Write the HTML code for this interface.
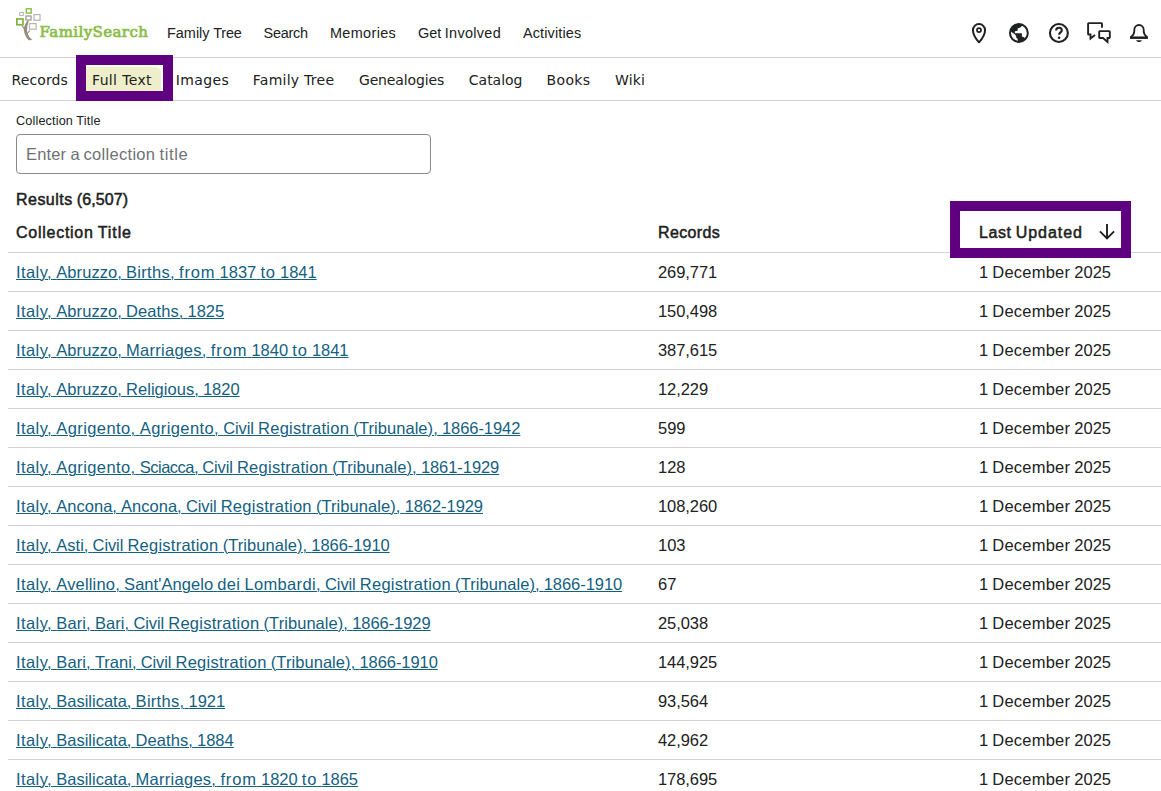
<!DOCTYPE html><html lang="en"><head><meta charset="utf-8"><title>FamilySearch Full Text Collections</title><style>
*{box-sizing:border-box;margin:0;padding:0}
html,body{width:1161px;height:791px;overflow:hidden;background:#fff}
body{font-family:"Liberation Sans", sans-serif;color:#202121;position:relative;-webkit-font-smoothing:auto}
a{color:#14607f}
header{position:absolute;left:0;top:0;width:1161px;height:58px;border-bottom:1px solid #d2d2d2}
.logo{position:absolute;left:0;top:0;width:160px;height:57px;text-decoration:none}
.logo svg{position:absolute;left:0;top:0}
.logo b{position:absolute;left:39.5px;top:21px;font-family:"DejaVu Serif","Liberation Serif",serif;font-weight:400;font-size:15px;line-height:22px;color:#8abd48;letter-spacing:0.4px;-webkit-text-stroke:0.7px #8abd48;white-space:nowrap}
nav.main a{position:absolute;top:22px;line-height:22px;white-space:nowrap;color:#202121;text-decoration:none}
.ic{position:absolute;top:21px;width:24px;height:24px}
nav.tabs{position:absolute;left:0;top:58px;width:1161px;height:43px;border-bottom:1px solid #d2d2d2;font-family:"DejaVu Sans",sans-serif;font-size:14px}
nav.tabs a{position:absolute;top:11px;line-height:22px;white-space:nowrap;color:#202121;text-decoration:none}
.hl1{position:absolute;left:76px;top:55px;width:97px;height:46px;border:10px solid #5e0080;background:#fff}
.hl1 i{position:absolute;left:0;top:2px;width:75px;height:24px;background:#eeeecb;border-radius:3px 5px 0 0}
.lbl{position:absolute;left:16px;top:111px;line-height:18px;white-space:nowrap}
.inp{position:absolute;left:16px;top:134px;width:415px;height:40px;border:1px solid #878a8c;border-radius:4px;background:#fff}
.inp>span{position:absolute;left:9px;top:8px;line-height:22px;color:#6e7274;white-space:nowrap}
.res{position:absolute;left:16px;top:189px;line-height:22px;font-weight:400;-webkit-text-stroke:0.5px #202121;white-space:nowrap}
.th{z-index:3;position:absolute;top:222px;line-height:22px;font-weight:400;-webkit-text-stroke:0.5px #202121;white-space:nowrap}
.hl2{z-index:2;position:absolute;left:950px;top:201px;width:181px;height:57px;border:10px solid #5e0080;background:#fff}
.row{position:absolute;left:8px;width:1153px;height:39px;border-top:1px solid #d2d2d2}
.row>*{position:absolute;top:8px;line-height:22px;white-space:nowrap}
.row a{left:8px;text-decoration:underline;text-decoration-thickness:1px;text-underline-offset:1px}
.row .n{left:650px}
.row .d{left:971px}
</style></head><body>
<header>
<a class="logo" href="#"><svg width="60" height="57" viewBox="0 0 60 57" fill="none">
<path d="M27.400 20.600C26 23.500 23.700 26 23.800 29.500 24 33.800 26 37.600 28.600 40.300L32.400 40.100C29.600 37.900 27.600 34.800 27.200 31.600 26.800 28 27.600 24.200 28.900 20.700z" fill="#978e7d"/>
<path d="M22 25.700L24.800 29.400M29.900 30.500L27.200 33.500" stroke="#978e7d" stroke-width="1.100"/>
<rect x="26.300" y="8.800" width="4.900" height="4.300" stroke="#8abd48" stroke-width="1.400"/>
<rect x="19.700" y="12.500" width="3.600" height="2.900" stroke="#b7b4af" stroke-width="1"/>
<rect x="25.950" y="16" width="5.100" height="4" stroke="#a39b92" stroke-width="1.300"/>
<rect x="34" y="14.600" width="6" height="5.700" stroke="#b7b4af" stroke-width="1.200"/>
<rect x="16.850" y="18.950" width="6.100" height="5.800" stroke="#7fb53e" stroke-width="1.700"/>
<rect x="29.500" y="23.600" width="6.600" height="5.600" stroke="#b7b4af" stroke-width="1.200"/>
</svg><b>FamilySearch</b></a>
<nav class="main">
<a href="#" style="left:167px"><span style="font-size:14.44px;word-spacing:-0.375px;"><span style="letter-spacing:0.010px;">Family</span> <span style="letter-spacing:-0.191px;">Tree</span></span></a>
<a href="#" style="left:263.5px"><span style="font-size:14.44px;"><span style="letter-spacing:-0.240px;">Search</span></span></a>
<a href="#" style="left:330px"><span style="font-size:14.44px;"><span style="letter-spacing:0.346px;">Memories</span></span></a>
<a href="#" style="left:418px"><span style="font-size:14.44px;word-spacing:-0.375px;"><span style="letter-spacing:-0.042px;">Get</span> <span style="letter-spacing:0.305px;">Involved</span></span></a>
<a href="#" style="left:523px"><span style="font-size:14.44px;"><span style="letter-spacing:0.136px;">Activities</span></span></a>
</nav>
<svg class="icons" style="position:absolute;left:960px;top:14px" width="200" height="38" viewBox="960 14 200 38" fill="none" stroke="#202121">
<path d="M979 42.3C975.2 38 972.95 34 972.95 30.15a6.050 6.050 0 0 1 12.100 0C985.050 34 982.800 38 979 42.300z" stroke-width="2" stroke-linejoin="round"/>
<circle cx="979" cy="30.1" r="2.050" stroke-width="1.700"/>
<clipPath id="gc"><circle cx="1018.900" cy="33" r="7.900"/></clipPath>
<circle cx="1018.900" cy="33" r="9.900" fill="#202121" stroke="none"/>
<g clip-path="url(#gc)" fill="#fff" stroke="none">
<path d="M1022.400 25.600L1025.500 24 1030 30 1030 37 1025.600 38.600 1023.400 36.900 1021.900 36.400 1021.900 33.300 1014.900 33.300 1014.900 31.200 1017.500 30.700 1017.800 28.200 1020.450 27.550z"/>
<path d="M1011.300 31.800L1009 31 1009 38 1013 42 1017.800 42 1017.650 39.050 1016.350 37.750 1016.150 36.100 1014.500 34.100 1012.550 32.800z"/>
</g>
<circle cx="1058.900" cy="33" r="8.950" stroke-width="2.1"/>
<path d="M1056.100 30.600c0-1.700 1.300-2.800 2.900-2.800s2.800 1.100 2.800 2.500c0 2-2.700 2.200-2.700 4.500" stroke-width="2.100"/>
<circle cx="1059.100" cy="37.800" r="1.300" fill="#202121" stroke="none"/>
<path d="M1102 27.800V23.700a.600.600 0 0 0-.600-.600H1088.700a.600.600 0 0 0-.600.600V33.900a.600.600 0 0 0 .600.600H1090.500V38.600L1095 34.900" stroke-width="1.900" stroke-linejoin="miter"/>
<path d="M1099.800 31.100H1109.200a.600.600 0 0 1 .600.600V37.400a.600.600 0 0 1-.600.600H1107.500V42L1103 38H1099.800a.600.600 0 0 1-.600-.600V31.700a.600.600 0 0 1 .600-.600z" stroke-width="1.900" stroke-linejoin="miter"/>
<path d="M1130.100 36.600H1147.900V38.900H1130.100z" fill="#202121" stroke="none"/>
<path d="M1131 37.700H1147V36.900C1144.700 35.300 1143.700 33.500 1143.700 31V29.700a4.700 4.700 0 0 0-9.400 0V31C1134.300 33.500 1133.300 35.300 1131 36.900z" stroke-width="1.800" stroke-linejoin="round"/>
<path d="M1136 40.300H1142C1141.400 41.500 1140.300 42.100 1139 42.100S1136.600 41.500 1136 40.300z" fill="#202121" stroke="none"/>
</svg>
</header>
<nav class="tabs">
</nav>
<div class="hl1"><i></i></div>
<nav class="tabs" style="border:0;background:none">
<a href="#" style="left:11.49px;letter-spacing:0.117px">Records</a>
<a href="#" style="left:91.99px;letter-spacing:0.357px">Full Text</a>
<a href="#" style="left:175.79px;letter-spacing:0.384px">Images</a>
<a href="#" style="left:252.79px;letter-spacing:0.257px">Family Tree</a>
<a href="#" style="left:358.93px;letter-spacing:-0.134px">Genealogies</a>
<a href="#" style="left:468.83px;letter-spacing:-0.021px">Catalog</a>
<a href="#" style="left:546.59px;letter-spacing:0.337px">Books</a>
<a href="#" style="left:614.99px;letter-spacing:0.124px">Wiki</a>
</nav>
<label class="lbl"><span style="font-size:12.68px;word-spacing:-0.328px;"><span style="letter-spacing:0.139px;">Collection</span> <span style="letter-spacing:0.216px;">Title</span></span></label>
<div class="inp"><span><span style="font-size:16.50px;word-spacing:-0.422px;"><span style="letter-spacing:0.153px;">Enter</span> <span style="letter-spacing:-0.203px;">a</span> <span style="letter-spacing:0.300px;">collection</span> <span style="letter-spacing:0.631px;">title</span></span></span></div>
<div class="res"><span style="font-size:16.00px;word-spacing:-0.281px;"><span style="letter-spacing:0.471px;">Results</span> <span style="letter-spacing:0.107px;">(6,507)</span></span></div>
<div class="hl2"></div>
<div class="th" style="left:16px"><span style="font-size:16.00px;word-spacing:-0.281px;"><span style="letter-spacing:0.738px;">Collection</span> <span style="letter-spacing:0.878px;">Title</span></span></div>
<div class="th" style="left:658px"><span style="font-size:16.00px;"><span style="letter-spacing:0.359px;">Records</span></span></div>
<div class="th" style="left:979px"><span style="font-size:16.00px;word-spacing:-0.281px;"><span style="letter-spacing:0.559px;">Last</span> <span style="letter-spacing:0.960px;">Updated</span></span></div>
<svg style="position:absolute;z-index:3;left:1096px;top:221px" width="22" height="22" viewBox="0 0 22 22" fill="none"><path d="M11 3.100V17.300M3.900 10.400l7.100 7.100 7.100-7.100" stroke="#202121" stroke-width="1.900"/></svg>
<div class="row" style="top:252px"><a href="#"><span style="font-size:16.50px;word-spacing:-0.422px;"><span style="letter-spacing:0.417px;">Italy,</span> <span style="letter-spacing:0.057px;">Abruzzo,</span> <span style="letter-spacing:0.286px;">Births,</span> <span style="letter-spacing:0.859px;">from</span> <span style="letter-spacing:-0.027px;">1837</span> <span style="letter-spacing:0.852px;">to</span> <span style="letter-spacing:-0.027px;">1841</span></span></a><span class="n"><span style="font-size:16.50px;"><span style="letter-spacing:-0.065px;">269,771</span></span></span><span class="d"><span style="font-size:16.50px;word-spacing:-0.422px;"><span style="letter-spacing:-0.031px;">1</span> <span style="letter-spacing:0.215px;">December</span> <span style="letter-spacing:-0.027px;">2025</span></span></span></div>
<div class="row" style="top:291px"><a href="#"><span style="font-size:16.50px;word-spacing:-0.422px;"><span style="letter-spacing:0.417px;">Italy,</span> <span style="letter-spacing:0.057px;">Abruzzo,</span> <span style="letter-spacing:0.060px;">Deaths,</span> <span style="letter-spacing:-0.027px;">1825</span></span></a><span class="n"><span style="font-size:16.50px;"><span style="letter-spacing:-0.065px;">150,498</span></span></span><span class="d"><span style="font-size:16.50px;word-spacing:-0.422px;"><span style="letter-spacing:-0.031px;">1</span> <span style="letter-spacing:0.215px;">December</span> <span style="letter-spacing:-0.027px;">2025</span></span></span></div>
<div class="row" style="top:330px"><a href="#"><span style="font-size:16.50px;word-spacing:-0.422px;"><span style="letter-spacing:0.417px;">Italy,</span> <span style="letter-spacing:0.057px;">Abruzzo,</span> <span style="letter-spacing:0.267px;">Marriages,</span> <span style="letter-spacing:0.859px;">from</span> <span style="letter-spacing:-0.027px;">1840</span> <span style="letter-spacing:0.852px;">to</span> <span style="letter-spacing:-0.027px;">1841</span></span></a><span class="n"><span style="font-size:16.50px;"><span style="letter-spacing:-0.065px;">387,615</span></span></span><span class="d"><span style="font-size:16.50px;word-spacing:-0.422px;"><span style="letter-spacing:-0.031px;">1</span> <span style="letter-spacing:0.215px;">December</span> <span style="letter-spacing:-0.027px;">2025</span></span></span></div>
<div class="row" style="top:369px"><a href="#"><span style="font-size:16.50px;word-spacing:-0.422px;"><span style="letter-spacing:0.417px;">Italy,</span> <span style="letter-spacing:0.057px;">Abruzzo,</span> <span style="letter-spacing:0.027px;">Religious,</span> <span style="letter-spacing:-0.027px;">1820</span></span></a><span class="n"><span style="font-size:16.50px;"><span style="letter-spacing:-0.068px;">12,229</span></span></span><span class="d"><span style="font-size:16.50px;word-spacing:-0.422px;"><span style="letter-spacing:-0.031px;">1</span> <span style="letter-spacing:0.215px;">December</span> <span style="letter-spacing:-0.027px;">2025</span></span></span></div>
<div class="row" style="top:408px"><a href="#"><span style="font-size:16.50px;word-spacing:-0.422px;"><span style="letter-spacing:0.417px;">Italy,</span> <span style="letter-spacing:0.408px;">Agrigento,</span> <span style="letter-spacing:0.408px;">Agrigento,</span> <span style="letter-spacing:-0.109px;">Civil</span> <span style="letter-spacing:0.256px;">Registration</span> <span style="letter-spacing:0.060px;">(Tribunale),</span> <span style="letter-spacing:-0.061px;">1866-1942</span></span></a><span class="n"><span style="font-size:16.50px;"><span style="letter-spacing:-0.021px;">599</span></span></span><span class="d"><span style="font-size:16.50px;word-spacing:-0.422px;"><span style="letter-spacing:-0.031px;">1</span> <span style="letter-spacing:0.215px;">December</span> <span style="letter-spacing:-0.027px;">2025</span></span></span></div>
<div class="row" style="top:447px"><a href="#"><span style="font-size:16.50px;word-spacing:-0.422px;"><span style="letter-spacing:0.417px;">Italy,</span> <span style="letter-spacing:0.408px;">Agrigento,</span> <span style="letter-spacing:-0.520px;">Sciacca,</span> <span style="letter-spacing:-0.109px;">Civil</span> <span style="letter-spacing:0.256px;">Registration</span> <span style="letter-spacing:0.060px;">(Tribunale),</span> <span style="letter-spacing:-0.061px;">1861-1929</span></span></a><span class="n"><span style="font-size:16.50px;"><span style="letter-spacing:-0.021px;">128</span></span></span><span class="d"><span style="font-size:16.50px;word-spacing:-0.422px;"><span style="letter-spacing:-0.031px;">1</span> <span style="letter-spacing:0.215px;">December</span> <span style="letter-spacing:-0.027px;">2025</span></span></span></div>
<div class="row" style="top:486px"><a href="#"><span style="font-size:16.50px;word-spacing:-0.422px;"><span style="letter-spacing:0.417px;">Italy,</span> <span style="letter-spacing:0.011px;">Ancona,</span> <span style="letter-spacing:0.011px;">Ancona,</span> <span style="letter-spacing:-0.109px;">Civil</span> <span style="letter-spacing:0.256px;">Registration</span> <span style="letter-spacing:0.060px;">(Tribunale),</span> <span style="letter-spacing:-0.061px;">1862-1929</span></span></a><span class="n"><span style="font-size:16.50px;"><span style="letter-spacing:-0.065px;">108,260</span></span></span><span class="d"><span style="font-size:16.50px;word-spacing:-0.422px;"><span style="letter-spacing:-0.031px;">1</span> <span style="letter-spacing:0.215px;">December</span> <span style="letter-spacing:-0.027px;">2025</span></span></span></div>
<div class="row" style="top:525px"><a href="#"><span style="font-size:16.50px;word-spacing:-0.422px;"><span style="letter-spacing:0.417px;">Italy,</span> <span style="letter-spacing:0.001px;">Asti,</span> <span style="letter-spacing:-0.109px;">Civil</span> <span style="letter-spacing:0.256px;">Registration</span> <span style="letter-spacing:0.060px;">(Tribunale),</span> <span style="letter-spacing:-0.061px;">1866-1910</span></span></a><span class="n"><span style="font-size:16.50px;"><span style="letter-spacing:-0.021px;">103</span></span></span><span class="d"><span style="font-size:16.50px;word-spacing:-0.422px;"><span style="letter-spacing:-0.031px;">1</span> <span style="letter-spacing:0.215px;">December</span> <span style="letter-spacing:-0.027px;">2025</span></span></span></div>
<div class="row" style="top:564px"><a href="#"><span style="font-size:16.50px;word-spacing:-0.422px;"><span style="letter-spacing:0.417px;">Italy,</span> <span style="letter-spacing:0.172px;">Avellino,</span> <span style="letter-spacing:0.049px;">Sant'Angelo</span> <span style="letter-spacing:0.323px;">dei</span> <span style="letter-spacing:0.335px;">Lombardi,</span> <span style="letter-spacing:-0.109px;">Civil</span> <span style="letter-spacing:0.256px;">Registration</span> <span style="letter-spacing:0.060px;">(Tribunale),</span> <span style="letter-spacing:-0.061px;">1866-1910</span></span></a><span class="n"><span style="font-size:16.50px;"><span style="letter-spacing:-0.023px;">67</span></span></span><span class="d"><span style="font-size:16.50px;word-spacing:-0.422px;"><span style="letter-spacing:-0.031px;">1</span> <span style="letter-spacing:0.215px;">December</span> <span style="letter-spacing:-0.027px;">2025</span></span></span></div>
<div class="row" style="top:603px"><a href="#"><span style="font-size:16.50px;word-spacing:-0.422px;"><span style="letter-spacing:0.417px;">Italy,</span> <span style="letter-spacing:0.094px;">Bari,</span> <span style="letter-spacing:0.094px;">Bari,</span> <span style="letter-spacing:-0.109px;">Civil</span> <span style="letter-spacing:0.256px;">Registration</span> <span style="letter-spacing:0.060px;">(Tribunale),</span> <span style="letter-spacing:-0.061px;">1866-1929</span></span></a><span class="n"><span style="font-size:16.50px;"><span style="letter-spacing:-0.068px;">25,038</span></span></span><span class="d"><span style="font-size:16.50px;word-spacing:-0.422px;"><span style="letter-spacing:-0.031px;">1</span> <span style="letter-spacing:0.215px;">December</span> <span style="letter-spacing:-0.027px;">2025</span></span></span></div>
<div class="row" style="top:642px"><a href="#"><span style="font-size:16.50px;word-spacing:-0.422px;"><span style="letter-spacing:0.417px;">Italy,</span> <span style="letter-spacing:0.094px;">Bari,</span> <span style="letter-spacing:0.016px;">Trani,</span> <span style="letter-spacing:-0.109px;">Civil</span> <span style="letter-spacing:0.256px;">Registration</span> <span style="letter-spacing:0.060px;">(Tribunale),</span> <span style="letter-spacing:-0.061px;">1866-1910</span></span></a><span class="n"><span style="font-size:16.50px;"><span style="letter-spacing:-0.065px;">144,925</span></span></span><span class="d"><span style="font-size:16.50px;word-spacing:-0.422px;"><span style="letter-spacing:-0.031px;">1</span> <span style="letter-spacing:0.215px;">December</span> <span style="letter-spacing:-0.027px;">2025</span></span></span></div>
<div class="row" style="top:681px"><a href="#"><span style="font-size:16.50px;word-spacing:-0.422px;"><span style="letter-spacing:0.417px;">Italy,</span> <span style="letter-spacing:-0.007px;">Basilicata,</span> <span style="letter-spacing:0.286px;">Births,</span> <span style="letter-spacing:-0.027px;">1921</span></span></a><span class="n"><span style="font-size:16.50px;"><span style="letter-spacing:-0.068px;">93,564</span></span></span><span class="d"><span style="font-size:16.50px;word-spacing:-0.422px;"><span style="letter-spacing:-0.031px;">1</span> <span style="letter-spacing:0.215px;">December</span> <span style="letter-spacing:-0.027px;">2025</span></span></span></div>
<div class="row" style="top:720px"><a href="#"><span style="font-size:16.50px;word-spacing:-0.422px;"><span style="letter-spacing:0.417px;">Italy,</span> <span style="letter-spacing:-0.007px;">Basilicata,</span> <span style="letter-spacing:0.060px;">Deaths,</span> <span style="letter-spacing:-0.027px;">1884</span></span></a><span class="n"><span style="font-size:16.50px;"><span style="letter-spacing:-0.068px;">42,962</span></span></span><span class="d"><span style="font-size:16.50px;word-spacing:-0.422px;"><span style="letter-spacing:-0.031px;">1</span> <span style="letter-spacing:0.215px;">December</span> <span style="letter-spacing:-0.027px;">2025</span></span></span></div>
<div class="row" style="top:759px"><a href="#"><span style="font-size:16.50px;word-spacing:-0.422px;"><span style="letter-spacing:0.417px;">Italy,</span> <span style="letter-spacing:-0.007px;">Basilicata,</span> <span style="letter-spacing:0.267px;">Marriages,</span> <span style="letter-spacing:0.859px;">from</span> <span style="letter-spacing:-0.027px;">1820</span> <span style="letter-spacing:0.852px;">to</span> <span style="letter-spacing:-0.027px;">1865</span></span></a><span class="n"><span style="font-size:16.50px;"><span style="letter-spacing:-0.065px;">178,695</span></span></span><span class="d"><span style="font-size:16.50px;word-spacing:-0.422px;"><span style="letter-spacing:-0.031px;">1</span> <span style="letter-spacing:0.215px;">December</span> <span style="letter-spacing:-0.027px;">2025</span></span></span></div>
</body></html>
